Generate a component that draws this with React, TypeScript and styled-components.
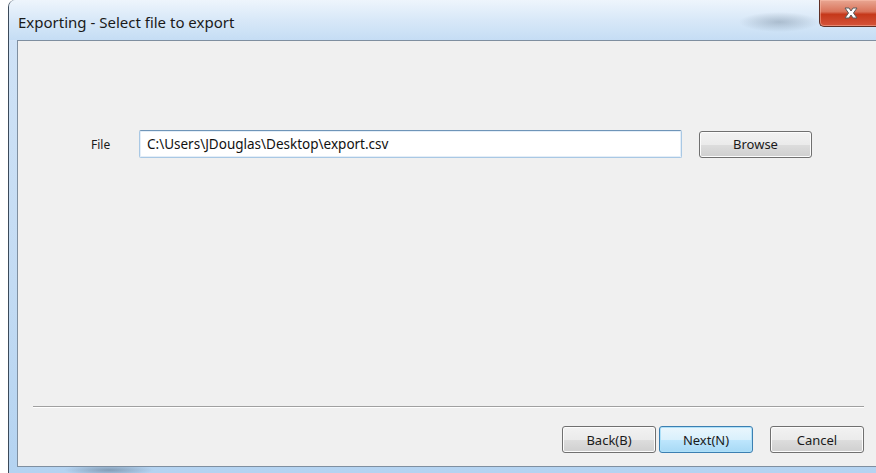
import styled, { createGlobalStyle } from 'styled-components';

const GlobalStyle = createGlobalStyle`
  html, body {
    margin: 0;
    padding: 0;
    background: #ffffff;
    overflow: hidden;
  }
  body {
    font-family: 'Noto Sans', 'Open Sans', sans-serif;
  }
`;

const Screen = styled.div`
  width: 876px;
  height: 473px;
  overflow: hidden;
  padding-left: 8px;
  box-sizing: border-box;
`;

const Window = styled.div`
  width: 880px;
  height: 473px;
  box-sizing: border-box;
  border-left: 1px solid #3b4a5a;
  border-top-left-radius: 7px;
  background:
    radial-gradient(ellipse 45px 6px at 100px 470px, rgba(70, 90, 110, 0.45), transparent),
    linear-gradient(180deg, #e9f2fb 0%, #cfe2f6 9%, #c3dbf3 60%, #b4d3f1 100%);
  display: flex;
  flex-direction: column;
`;

const TitleBar = styled.div`
  height: 40px;
  flex: none;
  display: flex;
  align-items: flex-start;
  background:
    radial-gradient(ellipse 40px 10px at 770px 22px, rgba(90, 110, 130, 0.35), transparent),
    linear-gradient(180deg, #eef5fc 0%, #d8e8f8 50%, #c5ddf4 100%);
  border-top-left-radius: 7px;
`;

const Title = styled.div`
  padding: 12px 0 0 9px;
  font-size: 15px;
  color: #1a1a1a;
  flex: 1;
`;

const CloseButton = styled.div`
  width: 69px;
  height: 27px;
  box-sizing: border-box;
  border: 1px solid #5e2f25;
  border-top: none;
  border-right: none;
  border-bottom-left-radius: 5px;
  background: linear-gradient(180deg, #e9a793 0%, #d9735a 45%, #c5381a 55%, #d5543a 100%);
  box-shadow: inset 0 0 0 1px rgba(255, 200, 180, 0.45);
  display: flex;
  align-items: center;
  padding-left: 23px;
`;

const Client = styled.div`
  flex: 1;
  margin: 0 0 6px 8px;
  border: 1px solid #7f8fa0;
  border-right: none;
  background: #f0f0f0;
  display: flex;
  flex-direction: column;
  padding: 0 24px 0 15px;
`;

const Body = styled.div`
  flex: 1;
  padding-top: 89px;
`;

const FileRow = styled.div`
  display: flex;
  align-items: center;
`;

const Label = styled.div`
  width: 106px;
  padding-left: 58px;
  box-sizing: border-box;
  font-size: 12px;
  color: #1a1a1a;
`;

const PathInput = styled.div`
  width: 543px;
  height: 28px;
  box-sizing: border-box;
  border: 1px solid #a9c8e4;
  border-top-color: #6f95b8;
  border-radius: 2px;
  background: #ffffff;
  box-shadow: inset 0 0 0 1px #e4eef8;
  display: flex;
  align-items: center;
  padding-left: 7px;
  font-size: 13.5px;
  color: #111;
`;

const Separator = styled.div`
  height: 1px;
  background: #a0a0a0;
  border-bottom: 1px solid #ffffff;
`;

const ButtonBar = styled.div`
  height: 58px;
  display: flex;
  justify-content: flex-end;
  align-items: flex-start;
  padding-top: 18px;
  box-sizing: border-box;
`;

const Button = styled.div<{ primary?: boolean; gap?: number }>`
  width: 94px;
  height: 27px;
  margin-left: ${(p) => p.gap ?? 0}px;
  box-sizing: border-box;
  border: 1px solid ${(p) => (p.primary ? '#3c7fb1' : '#707070')};
  border-radius: 3px;
  background: ${(p) =>
    p.primary
      ? 'linear-gradient(180deg, #eaf6fd 0%, #d9f0fc 50%, #bee6fd 51%, #a7d9f5 100%)'
      : 'linear-gradient(180deg, #f2f2f2 0%, #ebebeb 50%, #dddddd 51%, #cfcfcf 100%)'};
  box-shadow: inset 0 0 0 1px ${(p) => (p.primary ? '#aee1f9' : '#fcfcfc')};
  display: flex;
  align-items: center;
  justify-content: center;
  font-size: 13px;
  color: #1a1a1a;
`;

const BrowseButton = styled(Button)`
  width: 113px;
  margin-left: 17px;
`;

function CloseGlyph() {
  return (
    <svg width="16" height="12" viewBox="0 0 16 12">
      <path
        d="M2 1 H6 L8 4 L10 1 H14 L10.5 6 L14 11 H10 L8 8 L6 11 H2 L5.5 6 Z"
        fill="#ffffff"
        stroke="#5a5a5a"
        strokeWidth="1"
        strokeLinejoin="round"
      />
    </svg>
  );
}

export default function App() {
  return (
    <>
      <GlobalStyle />
      <Screen>
        <Window>
          <TitleBar>
            <Title>Exporting - Select file to export</Title>
            <CloseButton>
              <CloseGlyph />
            </CloseButton>
          </TitleBar>
          <Client>
            <Body>
              <FileRow>
                <Label>File</Label>
                <PathInput>C:\Users\JDouglas\Desktop\export.csv</PathInput>
                <BrowseButton>Browse</BrowseButton>
              </FileRow>
            </Body>
            <Separator />
            <ButtonBar>
              <Button>Back(B)</Button>
              <Button primary gap={3}>Next(N)</Button>
              <Button gap={17}>Cancel</Button>
            </ButtonBar>
          </Client>
        </Window>
      </Screen>
    </>
  );
}
